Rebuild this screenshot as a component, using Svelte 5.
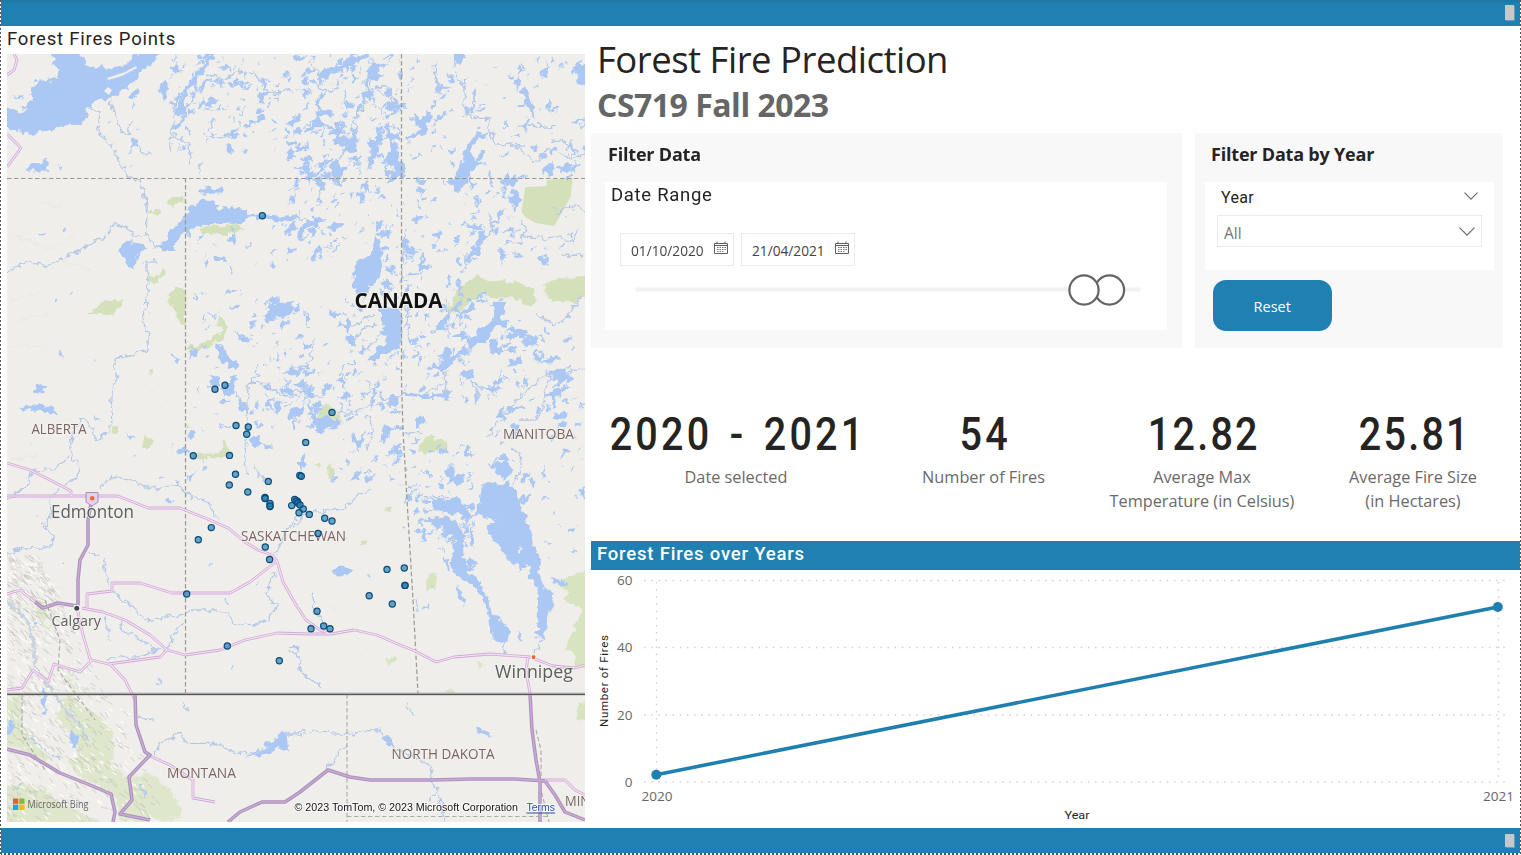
<script>
  const fires = [
    [262.3, 215.7], [215, 389.3], [225, 385.3], [236, 425.5], [248.3, 427], [246.7, 434.3], [193.3, 455.7],
    [229.5, 455.4], [235.5, 474.3], [229.3, 485], [247.8, 492], [268.3, 481.4], [265, 497.5], [265, 498.5],
    [270, 506.5], [270, 503.5], [270, 506], [211.3, 527.6], [198.3, 539.7], [265.3, 547], [269.6, 559.5],
    [332, 412.4], [305.7, 442.4], [299.8, 475.4], [301.3, 476.3], [294.7, 499.5], [297.3, 501.3], [296, 501],
    [298, 503], [291.7, 505.6], [300, 505], [303.3, 509], [299, 512.8], [309.3, 514.4], [324.7, 518.3],
    [332, 521], [318, 533.4], [387, 569.4], [404.3, 568], [405, 585.4], [405, 585.4], [369.2, 595.7],
    [392.3, 604], [317, 611.3], [311, 628.7], [323.7, 626], [330, 628.7], [186.7, 594], [227.3, 646], [279.3, 660.7]
  ];

  let seed = 719;
  function rnd() {
    seed = (seed * 16807) % 2147483647;
    return seed / 2147483647;
  }

  // Small lakes: jagged slivers spread over each region [x0, y0, x1, y1, count, size]
  const lakeRegions = [
    [170, 56, 290, 150, 110, 4], [290, 56, 400, 178, 215, 4.6], [400, 56, 585, 178, 105, 4.2],
    [285, 178, 400, 260, 85, 4], [400, 178, 520, 262, 85, 4.4], [520, 200, 585, 262, 10, 3.4],
    [186, 225, 290, 330, 32, 3.6], [340, 258, 470, 400, 135, 4], [440, 290, 520, 400, 65, 4.4],
    [500, 330, 585, 430, 54, 4.6], [250, 370, 350, 430, 70, 3.8], [330, 390, 400, 480, 58, 3.8],
    [400, 440, 475, 530, 66, 4], [420, 500, 475, 565, 40, 4.6], [260, 300, 345, 370, 32, 3.8],
    [185, 340, 260, 480, 20, 3.4], [490, 430, 585, 500, 24, 4.4], [20, 80, 180, 175, 8, 2.6],
    [20, 270, 180, 480, 12, 2.4], [545, 480, 585, 560, 10, 3.8], [200, 540, 400, 680, 12, 2],
    [20, 480, 180, 640, 14, 2], [400, 540, 440, 640, 6, 2.4]
  ];

  function sliver(x, y, size) {
    const angle = -0.9 + (rnd() - 0.5) * 2.2;
    const length = size * (0.4 + rnd() * rnd() * 2);
    const breadth = length * (0.18 + rnd() * 0.45);
    let d = '';
    for (let i = 0; i < 11; i++) {
      const t = (i / 11) * Math.PI * 2;
      const r = 0.35 + rnd() * 1.05;
      const u = Math.cos(t) * length * r;
      const v = Math.sin(t) * breadth * r;
      const px = x + u * Math.cos(angle) - v * Math.sin(angle);
      const py = y + u * Math.sin(angle) + v * Math.cos(angle);
      d += (i ? 'L' : 'M') + px.toFixed(1) + ' ' + py.toFixed(1);
    }
    return d + 'Z';
  }
  const slivers = lakeRegions
    .map(([x0, y0, x1, y1, count, size]) => {
      let d = '';
      for (let i = 0; i < count; i++) d += sliver(x0 + rnd() * (x1 - x0), y0 + rnd() * (y1 - y0), size);
      return d;
    })
    .join('');

  // Mountain shading: short ridges along the Rockies
  let ridges = '';
  let ridgeLights = '';
  for (let i = 0; i < 900; i++) {
    const y = 555 + rnd() * 267;
    const reach = y < 700 ? 30 + (y - 555) * 0.5 : 115 + (y - 700) * 0.35;
    const x = 7 + Math.pow(rnd(), 1.1) * reach;
    const dx = 1.5 + rnd() * 3;
    const dy = 1 + rnd() * 3.5;
    const d = `M${x.toFixed(1)} ${y.toFixed(1)}l${dx.toFixed(1)} ${dy.toFixed(1)}l${(rnd() * 2).toFixed(1)} ${(rnd() * 2).toFixed(1)}`;
    if (i % 3) ridges += d;
    else ridgeLights += d;
  }

  const crop = (x, y) => `translate(${x} ${y}) scale(.33333)`;
  const yTicks = [[60, 580.5], [40, 647.5], [20, 715], [0, 782]];
  const kpis = [
    { value: '2020 - 2021', lines: ['Date selected'] },
    { value: '54', lines: ['Number of Fires'] },
    { value: '12.82', lines: ['Average Max', 'Temperature (in Celsius)'] },
    { value: '25.81', lines: ['Average Fire Size', '(in Hectares)'] }
  ];
  const dates = ['01/10/2020', '21/04/2021'];
</script>

<div class="report">
  <header class="bar top"><span class="grip"></span></header>

  <main>
    <section class="map-panel">
      <h2 class="din map-title">Forest Fires Points</h2>
      <svg class="map" viewBox="7 54 578 768" width="578" height="768">
        <defs>
          <filter id="shore" filterUnits="userSpaceOnUse" x="0" y="40" width="600" height="800">
            <feTurbulence type="fractalNoise" baseFrequency=".16" numOctaves="2" seed="4" />
            <feDisplacementMap in="SourceGraphic" scale="9" xChannelSelector="R" yChannelSelector="G" />
          </filter>
        </defs>
        <rect x="7" y="54" width="578" height="768" fill="#efeeea" />

        <g class="green" filter="url(#shore)">
          <g transform={crop(0, 0)}>
            <path d="M502 600L530 590 556 592 556 610 530 612 508 620zM443 632L480 634 480 640 443 640zM600 688L640 678 720 672 732 686 700 700 650 706 610 700zM447 822L470 830 490 803 498 815 490 835 465 850 447 838z" />
          </g>
          <g transform={crop(0, 280)}>
            <path d="M258 102L285 90 305 62 370 62 350 95 325 105zM502 45L525 28 556 25 556 132 530 130 530 88 505 65zM455 0H482L468 10zM560 200L600 195 640 170 665 152 648 125 660 108 690 150 660 180 600 212 565 215zM425 480L440 468 455 485 448 505 430 500zM580 520L640 525 672 515 665 485 680 485 688 520 665 535 620 535 580 530zM335 445L352 440 355 458 338 462zM556 430L575 440 560 455zM447 275L462 262 460 280 450 287z" />
          </g>
          <g transform={crop(290, 280)}>
            <path d="M463 118L485 60 510 20 560-12 600 5 640 0 690 10 735 30 740 65 720 85 690 60 640 52 580 45 530 75zM762 15L800-5 900-10 900 40 850 68 790 65 765 40zM85 395L110 365 125 385 155 410 150 425 110 410 80 415zM385 510L410 470 430 465 435 482 475 485 475 505 430 512 410 528zM107 565L120 550 132 580 130 598 112 590zM285 685L305 683 300 702zM70 545L95 555 90 565zM205 785L232 790 215 798z" />
          </g>
          <g transform={crop(290, 560)}>
            <path d="M410 40L438 38 440 92 412 92zM285 295L310 288 320 300 300 313zM555 303L580 310 572 322zM470 390L492 390 492 402 470 402zM800 75L830 55 900 20 900 320 850 320 855 285 830 270 835 240 860 210 850 190 880 150 820 115 840 95zM865 430L900 428 900 490 865 480z" opacity=".85" />
          </g>
          <g transform={crop(0, 560)}>
            <path d="M180 420L220 405 245 440 290 460 335 510 345 570 330 610 370 650 450 640 510 690 540 740 545 772 470 785H360L350 720 300 680 240 650 200 600 240 590 225 540 170 470zM0 680L80 670 150 700 190 740 250 760 330 800H0zM95 110L130 130 155 200 145 220 120 180zM0 420L60 410 70 500 110 560 160 600 130 600 60 560 0 560zM190 340L220 370 255 400 225 400z" opacity=".62" />
          </g>
        </g>
        <path transform={crop(290, 0)} d="M706 562L770 558 770 540 848 535 842 590 820 630 792 678 735 668 705 650 694 634z" fill="#d4e0b9" />

        <path d={ridgeLights} stroke="#fff" stroke-width="1.300" fill="none" opacity=".75" />
        <path d={ridges} stroke="#b4b4ae" stroke-width=".8" fill="none" opacity=".6" />
        <g stroke="#e7e7e1" stroke-width="1" fill="none" filter="url(#shore)">
          <path d="M14 235L28 240 50 250 78 233M35 200L60 208M10 300L40 292M20 320L50 312M60 260L90 270M10 345L45 348M30 500L60 495M10 460L38 455" />
        </g>

        <path d={slivers} fill="#abc7f3" filter="url(#shore)" />

        <g class="water" filter="url(#shore)">
          <g transform={crop(0, 0)}>
            <path d="M150 140L162 190 178 210 175 232 140 241 108 242 100 262 92 272 98 300 80 320 60 322 82 332 60 338 0 318V378L45 390 70 398 110 398 160 388 200 374 245 375 262 352 258 340 268 325 290 298 305 292 320 305 335 292 360 285 380 262 400 245 430 210 475 168 500 140 440 140 400 170 380 190 345 205 320 210 305 195 280 200 258 192 240 170 236 140z" />
            <path d="M480 736L460 741 500 720 506 695 530 678 550 655 575 620 598 600 625 599 640 608 665 618 740 628 745 645 790 643 850 655 900 652V657L850 662 790 658 745 650 735 662 705 672 665 668 620 674 570 690 540 704 525 732 524 755 490 757z" />
            <path d="M358 747L372 725 420 730 438 743 428 755 412 768 408 795 398 804 385 800 380 780 362 772z" />
            <path d="M80 500L115 490 138 478 147 492 140 510 125 518 108 508 82 510zM170 490L185 495 184 507zM590 570L625 560 668 568 660 580 625 582 600 578zM690 712L710 708 703 728 686 724zM480 255L500 240 505 270 495 300 486 290zM395 420L410 418 412 440 398 442zM510 200L530 195 535 212 555 215 520 218zM385 290L415 265 425 272 400 298zM400 310L412 318 403 328zM40 292L70 288 65 300zM106 695L132 702 128 708zM190 688L200 682 200 696z" />
            <path d="M530 350L545 300 560 270 600 215 640 165" class="wide" />
            <path d="M620 225L680 238 710 215 760 215 790 260 820 280 850 268 880 280M332 300L345 350 365 400 385 400 392 360M395 410L425 455 460 465M270 325L300 335 295 380 300 405 320 415 340 450 355 480 385 530 420 540 435 590 440 640 440 700M440 700L400 710 390 690 345 670 320 705 260 740 200 770 150 797 85 785 50 800 0 830M440 700L460 740 480 740M432 790L470 785M432 785L450 855M510 460L520 360 530 290M545 360L575 300 620 235M520 400L565 430 575 490M610 400L640 412 700 415 720 360M600 490L595 525M335 295L310 280" class="river" />
          </g>
          <g transform={crop(290, 0)}>
            <path d="M475 140L522 140 522 180 510 190 492 178zM300 435L318 430 330 480 348 505 345 530 330 532 310 500 285 495zM240 465L245 430 280 383 275 425 250 490 232 510zM345 412L378 400 395 385 370 370 375 340 395 360 415 330 432 348 410 375 412 400 380 410 350 425zM560 400L600 402 590 412 560 418 545 440 548 480 590 495 560 500 545 525 520 560 500 575 488 570 495 530 515 490 525 445zM692 270L710 258 720 300 735 340 735 355 712 320zM672 235L690 232 692 262 675 262zM130 370L150 365 150 405 200 420 190 440 150 440 128 425 142 400zM120 500L145 480 155 560 130 540zM60 660L80 648 110 663 40 690 35 720 22 710 25 685zM195 790L240 770 255 710 270 730 280 800 255 855H190zM340 720L370 745 385 765 345 760zM560 720L575 690 590 710 560 745zM620 740L650 760 640 785zM665 570L685 570 692 610 670 630 660 600zM650 510L670 550 648 550zM30 268L55 270 50 300zM215 290L235 260 255 275 225 310zM480 480L495 490 485 498zM850 200L900 180 900 260 865 250z" />
            <path d="M245 170L255 200 240 260 220 310 195 350 200 390 160 410 165 450 135 490 130 550M505 235L525 270 520 320 545 355 600 355 600 395 620 435 670 432 735 485 780 445 850 475 900 455M680 380L720 375 760 382 800 378M780 420L820 425 855 450M440 185L435 215 445 280M700 265L735 350M700 708L760 715 800 710 850 725 865 690M800 640L850 615 900 635M815 765L900 767M0 650L50 657M260 270L320 310M450 280L435 210M95 560L80 620M160 430L135 375M600 640L610 690 560 745M525 760V810M690 660L710 690 690 730 650 720M345 690L330 850M60 185L90 230 85 270 150 275" class="river" />
          </g>
          <g transform={crop(0, 280)}>
            <path d="M60 380L90 378 130 372 165 385 172 402 150 400 120 392 70 392zM105 318L138 316 132 340 110 340zM790 110L820 80 825 60 880 65 870 110 830 115 800 125zM645 195L665 192 688 235 725 255 700 270 685 260 660 240zM625 290L650 288 665 315 640 318zM690 290L712 285 705 315 695 345 670 345 660 325 690 320zM715 360L735 365 742 400 725 390zM562 462L580 448 597 458 585 475 565 475zM527 510L555 498 568 518 548 528zM752 478L775 465 785 490 822 500 800 508 785 495 760 498zM820 370L842 360 835 405zM760 430L788 430 780 445zM280 408L300 418 288 427zM372 460L402 468 400 480zM510 225L545 240 525 245zM178 208L192 222 186 236zM697 155L760 178 740 188zM620 98L650 108 645 115z" />
            <path d="M443 0L440 70 425 110 445 160 443 205 400 225 345 235 345 300 335 360 335 430 325 455 290 485 270 430 240 415 212 480 215 530 240 560 220 600 180 620 150 660 155 700 130 740 160 770 155 800 60 805 0 830M22 660L80 620 95 575 170 565 210 530M300 620L340 585 400 600 430 620 480 625 530 610 575 650 620 665 655 715M700 330L740 385 745 310 800 310 840 345 900 350M735 400L745 450 735 540 745 585M760 560L795 605M770 250V290L750 310M830 820L860 750 900 700M560 650L530 600M260 820L300 825" class="river" />
          </g>
          <g transform={crop(290, 280)}>
            <path d="M190 0H240L235 40 210 50 190 25zM270 85L300 80 335 95 335 150 335 200 300 215 270 225 255 245 235 240 265 205 290 190 285 150 270 110zM72 415L110 405 148 432 115 440 95 460 72 455zM25 535L42 520 45 545 35 575zM615 70L645 65 640 100 625 135 600 155 600 185 560 190 535 205 540 185 570 145 610 125zM425 250L455 255 475 240 520 205 535 210 480 255 455 275 430 265zM510 280L550 265 545 290 520 292zM345 335L400 345 460 340 500 352 400 355 345 350zM375 415L405 405 402 430 375 440zM400 572L425 570 420 598zM465 570L490 555 490 590 525 580 520 610 480 610zM425 655L480 660 500 645 540 700 520 720 500 700 430 690zM310 495L325 490 325 520 310 525zM770 275L825 265 825 285 790 300zM195 480L222 475 205 515zM640 600L665 580 655 535 612 555 625 540 672 540 640 520 600 555 660 620zM350 505L380 515 370 530zM650 170L690 140 685 165 665 180zM410 715L460 710 500 720 520 760 520 855H485L495 780 465 745 410 725zM535 770L550 740 548 810z" />
            <path d="M575 618L590 608 630 615 655 605 680 640 690 680 720 740 735 800 745 855H710L690 795 680 850 660 850 650 830 620 790 602 770 590 740 605 728 620 722 558 706 570 660z" />
            <path d="M190 140L250 100M190 190L210 150 260 135M215 215L270 170M150 397L190 400 240 375 290 370 340 345M225 355L245 320 230 300M40 355L100 350M460 275L470 340M540 300L570 350M590 470L640 410 700 340 760 290 900 262M780 290L755 390 740 420 690 420M665 500L690 520 695 570 670 610M740 100L790 135 830 115 870 50M470 60L475 180M345 60L360 180M345 465L400 455M0 750L50 700 100 695 165 685 200 650 250 625M235 400L250 450 230 510M60 330L0 340M30 430L0 410M60 240L75 175M400 650L480 650M390 720L480 715 500 850M460 310L400 345M550 310L620 350" class="river" />
          </g>
          <g transform={crop(290, 560)}>
            <path d="M480 0L520-10 540 30 530 40 560 50 600 130 605 165 640 180 660 215 655 245 615 248 600 190 592 150 575 110 545 75 500 50zM650 0L680 10 695 40 705 15 725 15 715 50 735 60 742 90 745 120 740 235 765 237 768 180 790 130 795 100 765 90 745 40 750 0 745-20 700-30zM500 78L530 120 520 138 505 115zM127 28L150 15 185 30 165 45 130 48zM685 210L695 240 682 230zM780 50L830 65 830 78 790 70zM0 258L25 260 20 275zM560 500L585 515 612 525 580 530 558 515zM275 520L300 530 310 560 285 550z" />
            <path d="M640 240V285M755 240L725 290M375 120L385 155M70 95L70 140 110 205M0 270L40 300 25 320 50 350 100 385M0 520L50 515 165 520 190 520 240 510 270 510 310 560 390 600 420 615 425 660 445 690 455 740 470 785M165 555L140 590 110 630M350 430L370 470M415 725L440 690" class="river" />
          </g>
          <g transform={crop(0, 560)}>
            <path d="M213 515L230 520 232 555 218 562 208 540zM468 350L485 360 480 375zM865 258L895 258 895 275zM795 550L830 535 845 510 860 525 865 575 835 565 790 585 730 590 800 565zM22 490L45 480 40 510 22 525zM125 380L140 400 135 470 125 440z" />
            <path d="M340 95L400 145 440 180 540 165 580 150 650 150 690 165 700 190 770 195 810 175 830 140 795 100 825 40M310 0L325 70M310 150L330 240M360 180L370 220 410 230 470 270M555 185L515 230 500 275M325 300L360 290 400 295 470 270 515 265M460 590L480 550 540 520 560 550 640 550 720 580 800 570M850 525H900M415 475L465 480M545 430L565 450M235 485L270 545M80 530L180 600M45 690L75 670M415 665L440 715" class="river" />
            <path d="M10 120L75 170 100 240 105 320 145 370 195 450 240 500" stroke="#c9d2dd" stroke-width="8" fill="none" />
          </g>
        </g>
        <g fill="#efeeea">
          <path d="M107 78L125 72 136 66 137 68 122 76 108 80zM104 91L108 87 112 90 109 95zM108 68L118 63 126 60 120 66zM216 208L221 205 224 208 219 211z" />
        </g>

        <g class="border-lines">
          <path d="M7 178.500H585M185.500 178V694M401.500 54V380L403 430 407 500 413 600 418 694" />
          <path d="M347 694V822M347 816.500H548M536 730L541 750 541 790 549 822M22 695V735L45 770M45 600L60 640 58 670 80 700 95 720" opacity=".75" />
        </g>

        <g class="roads">
          {#each ['casing', 'core'] as layer}
            <g class={layer}>
              <path d="M7 75L14 70 17 60 14 54M7 134L21 148 7 167M7 463L30 470 50 480 71 491V496M7 496H118L148 508H180L210 520 228 528 245 542 258 550 272 555 277 561M277 561L283 582 296 605 306 620 320 630 331 634 354 630 377 635 400 645 415 651 436 662 454 657 490 654 530 657 553 666 575 668 585 665M7 690L22 688 33 670 48 682 54 664 80 672 92 660 108 664 160 657 167 650 150 635 125 620 103 612 82 608M77 608L83 635 91 662M87 608V594L112 591V583L140 583 172 593H230L250 582 277 561M167 650L185 655 220 650 245 640 277 633 310 634H331M110 664L125 680 135 700M150 756L170 765 193 780V798L215 802M528 658L526 670 530 694M542 780H565L575 790 585 795M7 594L20 590 35 602" />
            </g>
          {/each}
          {#each ['casing heavy', 'core heavy'] as layer}
            <g class={layer}>
              <path d="M92 498L88 520V545L80 560 78 580V608M77 606L58 603 43 608 35 602M135 694L136 725 145 752 150 755 129 777 132 800 120 814 150 820M7 749L30 755 60 773 90 785 111 794 115 812 113 822M228 822L240 812 262 802H285L300 792 328 770 350 777 370 780H432L470 779H515L545 781M530 694L532 730 536 760 540 782V822M545 781L555 795 565 812 585 820" />
            </g>
          {/each}
        </g>

        <path d="M7 694H585" stroke="#b0b0ae" stroke-width="3.500" opacity=".6" />
        <path d="M7 694.300H585" stroke="#555" stroke-width="1.300" />

        <path d="M86 492.500H98V502L92 506 86 502Z" fill="#e3d3ea" stroke="#9d7bb2" stroke-width=".8" />
        <rect x="90.200" y="496.200" width="4" height="4" rx="1" fill="#f0662f" />
        <rect x="531" y="654.500" width="5" height="5" rx="1" fill="#fff" />
        <rect x="531.800" y="655.300" width="3.600" height="3.600" rx="1" fill="#f0662f" />
        <rect x="73.500" y="605" width="6.500" height="6.500" rx="2" fill="#fff" />
        <circle cx="76.800" cy="608.300" r="2.500" fill="#444" />

        <g class="labels">
          <text x="354.500" y="308" class="country" textLength="88" lengthAdjust="spacingAndGlyphs">CANADA</text>
          <text x="31.500" y="434" textLength="55" lengthAdjust="spacingAndGlyphs">ALBERTA</text>
          <text x="503" y="438.500" textLength="71" lengthAdjust="spacingAndGlyphs">MANITOBA</text>
          <text x="241" y="540.500" textLength="105" lengthAdjust="spacingAndGlyphs">SASKATCHEWAN</text>
          <text x="167" y="778" textLength="69" lengthAdjust="spacingAndGlyphs">MONTANA</text>
          <text x="391.500" y="759" textLength="103" lengthAdjust="spacingAndGlyphs">NORTH DAKOTA</text>
          <text x="565" y="806" textLength="25" lengthAdjust="spacingAndGlyphs">MIN</text>
          <text x="51" y="518" class="city" textLength="83" lengthAdjust="spacingAndGlyphs">Edmonton</text>
          <text x="51.500" y="625.500" class="city small" textLength="49.500" lengthAdjust="spacingAndGlyphs">Calgary</text>
          <text x="495" y="677.500" class="city" textLength="78" lengthAdjust="spacingAndGlyphs">Winnipeg</text>
        </g>

        <g class="fires">
          {#each fires as [x, y]}
            <circle cx={x} cy={y} r="3.100" />
          {/each}
        </g>

        <path d="M13 798.500H18.300V803.800H13z" fill="#f1592a" />
        <path d="M19.200 798.500H24.500V803.800H19.200z" fill="#80bb3c" />
        <path d="M13 804.700H18.300V810H13z" fill="#1fa4e8" />
        <path d="M19.200 804.700H24.500V810H19.200z" fill="#fbb813" />
        <text x="27.500" y="808.300" class="bing" textLength="61" lengthAdjust="spacingAndGlyphs">Microsoft Bing</text>
        <text x="294.500" y="811" class="credit" textLength="223.500" lengthAdjust="spacingAndGlyphs">© 2023 TomTom, © 2023 Microsoft Corporation</text>
        <text x="526.500" y="811" class="credit terms" textLength="28.500" lengthAdjust="spacingAndGlyphs">Terms</text>
        <path d="M526.500 813H555" stroke="#2a4fae" stroke-width="1" />
      </svg>
    </section>

    <section class="content">
      <h1>Forest Fire Prediction</h1>
      <p class="course">CS719 Fall 2023</p>

      <div class="filters">
        <div class="panel range">
          <h3>Filter Data</h3>
          <div class="card">
            <h4 class="din">Date Range</h4>
            <div class="dates">
              {#each dates as date}
                <div class="date">
                  <span>{date}</span>
                  <svg width="14" height="14" viewBox="0 0 14 14">
                    <path d="M.5 2.500H13.500V12.500H.5zM.5 4.500H13.500M3 .5V2.500M11 .5V2.500" fill="none" stroke="#605e5c" />
                    <path d="M3 6.500H12M3 8.500H12M3 10.500H10" stroke="#777" stroke-dasharray="1.500 1" />
                  </svg>
                </div>
              {/each}
            </div>
            <svg class="slider" width="540" height="34" viewBox="0 0 540 34">
              <rect x="15.500" y="14.500" width="505" height="4" rx="1" fill="#f3f2f1" />
              <circle cx="489.500" cy="17" r="14.600" />
              <circle cx="464" cy="17" r="14.600" />
            </svg>
          </div>
        </div>

        <div class="panel year">
          <h3>Filter Data by Year</h3>
          <div class="card">
            <div class="year-head">
              <span>Year</span>
              <svg width="14" height="8" viewBox="0 0 14 8"><path d="M.5 .7L7 7.200 13.500 .7" /></svg>
            </div>
            <div class="select">
              <span>All</span>
              <svg width="16" height="9" viewBox="0 0 16 9"><path d="M.5 .7L8 8.200 15.500 .7" /></svg>
            </div>
          </div>
          <button>Reset</button>
        </div>
      </div>

      <div class="kpis">
        {#each kpis as kpi}
          <div class="kpi">
            <strong class:decimal={kpi.value.includes('.')}>{kpi.value}</strong>
            {#each kpi.lines as line}<span>{line}</span>{/each}
          </div>
        {/each}
      </div>

      <h2 class="chart-title">Forest Fires over Years</h2>
      <svg class="chart" width="929" height="258" viewBox="591 570 929 258">
        {#each yTicks as [label, y]}
          <path class="grid" d={`M644 ${y}H1508`} />
          <text x="632.500" y={y + 4.800} text-anchor="end">{label}</text>
        {/each}
        <path class="grid" d="M656.500 582V782M1498.500 582V782" />
        <path d="M656.300 774.700L1497.800 607" stroke="#1f80b0" stroke-width="3.600" />
        <circle cx="656.300" cy="774.700" r="5" fill="#1f80b0" />
        <circle cx="1497.800" cy="607" r="5" fill="#1f80b0" />
        <text x="641.500" y="801" textLength="31" lengthAdjust="spacingAndGlyphs">2020</text>
        <text x="1483" y="801" textLength="31" lengthAdjust="spacingAndGlyphs">2021</text>
        <text class="axis" x="1064.500" y="818.500" textLength="25" lengthAdjust="spacingAndGlyphs">Year</text>
        <text class="axis" transform="translate(608 727) rotate(-90)" textLength="92">Number of Fires</text>
      </svg>
    </section>
  </main>

  <footer class="bar bottom"><span class="grip"></span></footer>
</div>

<style>
  :global(body) {
    margin: 0;
    background: #fff;
  }
  .report {
    box-sizing: border-box;
    width: 1521px;
    height: 855px;
    overflow: hidden;
    display: flex;
    flex-direction: column;
    padding: 0 1px 2px;
    font-family: 'Open Sans', 'Noto Sans', sans-serif;
    color: #252423;
    background:
      repeating-linear-gradient(to bottom, #555 0 2px, #fff 2px 4px) left / 1px 100% no-repeat,
      repeating-linear-gradient(to bottom, #555 0 2px, #fff 2px 4px) right / 1px 100% no-repeat,
      repeating-linear-gradient(to right, #555 0 2px, #fff 2px 4px) bottom / 100% 2px no-repeat,
      #fff;
  }
  h1, h2, h3, h4, p {
    margin: 0;
    white-space: nowrap;
  }
  .din {
    font-family: Roboto, sans-serif;
    font-weight: 400;
  }
  .bar {
    flex: none;
    display: flex;
    justify-content: flex-end;
    align-items: center;
    padding-right: 6px;
    background: #2080b2;
  }
  .top {
    height: 26px;
    background: linear-gradient(#1d76a3, #2080b2 4px);
  }
  .bottom {
    height: 25px;
  }
  .grip {
    width: 9px;
    height: 15px;
    margin-bottom: 1px;
    background: #c8c8c8;
    box-shadow: 1px 1px 0 #5d9fc2;
  }
  .bottom .grip {
    height: 13px;
    margin: 0;
  }
  main {
    height: 802px;
    display: grid;
    grid-template-columns: 590px 929px;
  }
  .map-panel {
    padding-left: 6px;
  }
  .map-title {
    height: 28px;
    line-height: 26px;
    font-size: 18.500px;
    letter-spacing: .8px;
  }
  .map, .chart {
    display: block;
  }
  .green {
    fill: #d4e0b9;
  }
  .water {
    fill: #abc7f3;
  }
  .river {
    fill: none;
    stroke: #b3c8e8;
    stroke-width: 4;
    stroke-linejoin: round;
  }
  .wide {
    fill: none;
    stroke: #abc7f3;
    stroke-width: 13;
  }
  .border-lines {
    fill: none;
    stroke: #9c9890;
    stroke-width: 1.200;
    stroke-dasharray: 4.500 2.500;
  }
  .roads {
    fill: none;
    stroke-linejoin: round;
  }
  .casing {
    stroke: #d4a8d8;
    stroke-width: 2.800;
  }
  .core {
    stroke: #f3e6f3;
    stroke-width: 1.200;
  }
  .casing.heavy {
    stroke: #ab8fbe;
    stroke-width: 3.500;
  }
  .core.heavy {
    stroke: #c9acd2;
    stroke-width: 1.400;
  }
  .fires circle {
    fill: #2080b2;
    fill-opacity: .68;
    stroke: #0b4a7a;
    stroke-width: 1.200;
  }
  .labels text {
    font-size: 15px;
    fill: #7b6461;
    stroke: #f4f3ef;
    stroke-width: 2px;
    stroke-opacity: .7;
    paint-order: stroke;
  }
  .labels .country {
    font-size: 21.500px;
    font-weight: 700;
    fill: #111;
  }
  .labels .city {
    font-size: 18px;
    fill: #5d5d5d;
  }
  .labels .small {
    font-size: 15px;
  }
  .bing {
    font-size: 10px;
    fill: #666;
  }
  .credit {
    font-family: 'Liberation Sans', Arial, sans-serif;
    font-size: 10.700px;
    fill: #111;
    stroke: #fff;
    stroke-width: 2px;
    stroke-opacity: .7;
    paint-order: stroke;
  }
  .terms {
    fill: #2a4fae;
  }
  h1 {
    height: 53px;
    padding: 7px 0 0 6px;
    line-height: 52px;
    font-size: 36.500px;
    font-weight: 400;
    letter-spacing: -.5px;
  }
  .course {
    height: 47px;
    margin-top: -5px;
    padding: 0 0 0 6px;
    line-height: 48px;
    font-size: 32px;
    font-weight: 700;
    letter-spacing: -.5px;
    color: #666;
    margin-bottom: 5px;
  }
  .filters {
    display: flex;
    gap: 13px;
    height: 215px;
  }
  .panel {
    box-sizing: border-box;
    background: #f8f8f8;
  }
  .range {
    width: 591px;
    padding: 0 15px 0 14px;
  }
  .year {
    width: 308px;
    padding: 0 9px 0 10px;
  }
  h3 {
    height: 49px;
    line-height: 43px;
    padding-left: 3px;
    font-size: 18px;
    font-weight: 700;
    letter-spacing: -.2px;
  }
  .year h3 {
    padding-left: 6px;
  }
  .card {
    background: #fff;
  }
  .range .card {
    height: 148px;
  }
  .year .card {
    height: 87.500px;
  }
  h4 {
    height: 51px;
    line-height: 26px;
    padding-left: 6px;
    font-size: 18.500px;
    letter-spacing: .7px;
  }
  .dates {
    display: flex;
    gap: 7px;
    padding-left: 15px;
  }
  .date {
    box-sizing: border-box;
    width: 114px;
    height: 33px;
    padding: 0 5px 0 10px;
    border: 1px solid #eaeaea;
    display: flex;
    align-items: center;
    justify-content: space-between;
    font-size: 13.700px;
    color: #444;
  }
  .date span {
    padding-top: 2px;
  }
  .date svg {
    margin-bottom: 3px;
  }
  .slider {
    display: block;
    margin: 7px 0 0 15px;
  }
  .slider circle {
    fill: #fff;
    stroke: #666462;
    stroke-width: 2.200;
  }
  .year-head {
    height: 33px;
    padding: 0 16px;
    display: flex;
    align-items: center;
    justify-content: space-between;
    font: 400 16px Roboto, sans-serif;
    letter-spacing: .3px;
  }
  .year-head span {
    margin-top: -2px;
  }
  .year-head svg {
    margin: -6px 0 0 0;
  }
  .select {
    box-sizing: border-box;
    height: 32px;
    margin: 0 12px;
    padding: 4px 6px 0;
    border: 1px solid #eaeaea;
    display: flex;
    align-items: center;
    justify-content: space-between;
    font-size: 15.500px;
    color: #777;
  }
  .select svg {
    margin-top: -3px;
  }
  .year svg path {
    fill: none;
    stroke: #666;
    stroke-width: 1.100;
  }
  button {
    display: block;
    width: 118.500px;
    height: 51px;
    margin: 10.500px 0 0 8px;
    padding: 2px 0 0;
    border: 0;
    border-radius: 13px;
    background: #2080b2;
    color: #fff;
    font: 14.500px 'Open Sans', sans-serif;
  }
  .kpis {
    height: 193px;
    display: grid;
    grid-template-columns: 290px 205px 232px 190px;
  }
  .kpi {
    padding-top: 57px;
    display: flex;
    flex-direction: column;
    align-items: center;
    white-space: nowrap;
  }
  .kpi strong {
    height: 60px;
    margin-right: -4px;
    font: 500 46.500px/59px Roboto, sans-serif;
    letter-spacing: 3.800px;
    word-spacing: 5px;
    transform: scaleX(.85);
  }
  .kpi strong.decimal {
    letter-spacing: 2.600px;
  }
  .kpi span {
    height: 24px;
    line-height: 24px;
    font-size: 16.300px;
    color: #6b6968;
  }
  .chart-title {
    height: 28.500px;
    box-sizing: border-box;
    padding-left: 6px;
    background: #2080b2;
    color: #fff;
    font: 500 18.500px/26px Roboto, sans-serif;
    letter-spacing: .8px;
  }
  .chart text {
    font-size: 13.500px;
    fill: #666;
  }
  .chart .axis {
    font: 11.500px Roboto, sans-serif;
    fill: #252423;
  }
  .grid {
    fill: none;
    stroke: #d0d0d0;
    stroke-width: 1.400;
    stroke-dasharray: 1.500 5.660;
  }
</style>
